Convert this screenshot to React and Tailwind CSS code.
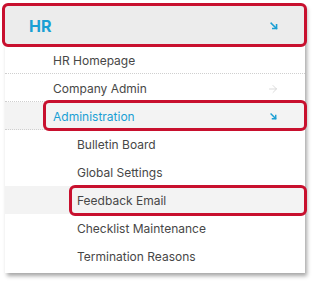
import { ArrowRight } from "lucide-react";

function DiagArrow({ className }) {
  return (
    <svg viewBox="0 0 10 10" className={className} fill="none">
      <path d="M1.5 1.5 L8 8" stroke="currentColor" strokeWidth="2" strokeLinecap="square" />
      <path d="M3.5 8.2 H8.2 V3.5" stroke="currentColor" strokeWidth="2" strokeLinecap="square" />
    </svg>
  );
}

const subItems = [
  { label: "Bulletin Board" },
  { label: "Global Settings" },
  { label: "Feedback Email", active: true },
  { label: "Checklist Maintenance" },
  { label: "Termination Reasons" },
];

export default function App() {
  return (
    <div className="h-[284px] w-[314px] bg-white pl-[5px] pt-[5px] font-['Inter',sans-serif] text-[12px] text-[#474747]">
      <div className="w-[300px] bg-white pb-[3px] shadow-[2px_3px_4px_rgba(0,0,0,0.35)]">
        <div className="relative flex h-[41px] items-center justify-between bg-[#ececec] pl-[24px] pr-[27px]">
          <span className="text-[16px] font-bold text-[#1a9fd4]">HR</span>
          <DiagArrow className="h-[8px] w-[8px] text-[#1a9fd4]" />
          <span className="absolute -top-[2px] -left-[3px] -right-[2px] -bottom-[1px] rounded-[6px] border-[3px] border-[#c8102e]" />
        </div>
        <div className="flex h-[28px] items-center border-b border-dotted border-[#cfcfcf] pl-[48px] pt-[2px]">HR Homepage</div>
        <div className="flex h-[28px] items-center justify-between border-b border-dotted border-[#cfcfcf] pl-[48px] pr-[26px] pt-[2px]">
          <span>Company Admin</span>
          <ArrowRight className="h-[12px] w-[12px] text-[#cfcfcf]" strokeWidth={1.5} />
        </div>
        <div className="relative flex h-[28px] items-center justify-between border-b border-dotted border-[#cfcfcf] bg-[#f3f3f3] pl-[48px] pr-[28px] pt-[2px] text-[#1a9fd4]">
          <span>Administration</span>
          <DiagArrow className="h-[7px] w-[7px] text-[#1a9fd4]" />
          <span className="absolute -top-[2px] left-[38px] -right-[2px] -bottom-[2px] rounded-[6px] border-[3px] border-[#c8102e]" />
        </div>
        {subItems.map((item) => (
          <div
            key={item.label}
            className={
              item.active
                ? "relative flex h-[28px] items-center bg-[#f3f3f3] pl-[72px] pt-[2px]"
                : "flex h-[28px] items-center pl-[72px] pt-[2px]"
            }
          >
            {item.label}
            {item.active && (
              <span className="absolute -top-[1px] left-[64px] -right-[2px] -bottom-[2px] rounded-[6px] border-[3px] border-[#c8102e]" />
            )}
          </div>
        ))}
      </div>
    </div>
  );
}
